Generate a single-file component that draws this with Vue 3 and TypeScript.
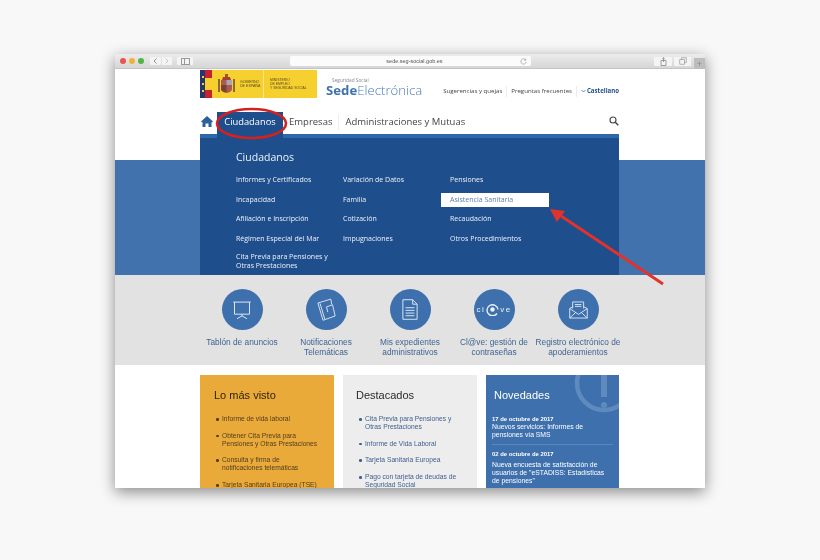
<script setup lang="ts">
const menu: string[][] = [
  ['Informes y Certificados', 'Incapacidad', 'Afiliación e Inscripción', 'Régimen Especial del Mar', 'Cita Previa para Pensiones y Otras Prestaciones'],
  ['Variación de Datos', 'Familia', 'Cotización', 'Impugnaciones'],
  ['Pensiones', 'Asistencia Sanitaria', 'Recaudación', 'Otros Procedimientos'],
]
const masVisto = ['Informe de vida laboral', 'Obtener Cita Previa para Pensiones y Otras Prestaciones', 'Consulta y firma de notificaciones telemáticas', 'Tarjeta Sanitaria Europea (TSE)']
const destacados = ['Cita Previa para Pensiones y Otras Prestaciones', 'Informe de Vida Laboral', 'Tarjeta Sanitaria Europea', 'Pago con tarjeta de deudas de Seguridad Social']
</script>

<template>
  <div class="desk">
    <div class="window">
      <div class="chrome">
        <div class="lights"><i class="r"></i><i class="y"></i><i class="g"></i></div>
        <div class="navbtns">
          <span><svg width="4" height="6" viewBox="0 0 4 6"><path d="M3.500 .5L1 3l2.500 2.500" fill="none" stroke="#777" stroke-width=".8"/></svg></span>
          <span><svg width="4" height="6" viewBox="0 0 4 6"><path d="M.5 .5L3 3 .5 5.500" fill="none" stroke="#bbb" stroke-width=".8"/></svg></span>
        </div>
        <div class="sidebtn"><svg width="9" height="7" viewBox="0 0 9 7"><rect x=".5" y=".5" width="8" height="6" fill="none" stroke="#999"/><path d="M3.500 .5v6" stroke="#999"/></svg></div>
        <div class="url">
          <span class="urltext">sede.seg-social.gob.es</span>
          <svg class="reload" width="7" height="7" viewBox="0 0 8 8"><path d="M6.500 2.200A3 3 0 1 0 7 4.500M6.600 .8v1.800H4.800" fill="none" stroke="#999" stroke-width=".8"/></svg>
        </div>
        <div class="rbtn"><svg width="7" height="9" viewBox="0 0 7 9"><path d="M1 3.500h5v5H1zM3.500 5V.8M2.200 2l1.300-1.200L4.800 2" fill="none" stroke="#888" stroke-width=".8"/></svg></div>
        <div class="rbtn"><svg width="8" height="8" viewBox="0 0 8 8"><path d="M2.500 2.500V.7h4.800v4.800H5.500M.7 2.500h4.800v4.800H.7z" fill="none" stroke="#999" stroke-width=".7"/></svg></div>
        <div class="plus">+</div>
      </div>

      <div class="page">
        <header class="head">
          <div class="flagbox">
            <div class="flagstrip">
              <div class="navy"><i></i><i></i><i></i></div>
              <div class="rojo"><i class="st1"></i><i class="st2"></i><i class="st3"></i></div>
            </div>
            <div class="gob">
              <svg class="crest" width="19" height="22" viewBox="0 0 19 22">
                <rect x="1" y="6" width="2" height="13" fill="#8a6a3a"/><rect x="16" y="6" width="2" height="13" fill="#8a6a3a"/>
                <path d="M6 4h7l1 3H5z" fill="#a6402e"/><path d="M8 1h3v3H8z" fill="#9a5a28"/>
                <path d="M4 7h11v9q0 3-5.500 4Q4 19 4 16z" fill="#a85c50"/><path d="M9.500 7h5.500v5h-5.500z" fill="#a9a4b4"/><path d="M4 12h5.500v7Q4 18.500 4 16z" fill="#7c4030"/>
              </svg>
              <span class="gobtxt">GOBIERNO<br>DE ESPAÑA</span>
            </div>
            <div class="min">MINISTERIO<br>DE EMPLEO<br>Y SEGURIDAD SOCIAL</div>
          </div>
          <div class="sede">
            <div class="seg">Seguridad Social</div>
            <div class="sedename"><b>Sede</b>Electrónica</div>
          </div>
          <div class="links">
            <span>Sugerencias y quejas</span><em></em><span>Preguntas frecuentes</span><em></em>
            <svg width="5" height="4" viewBox="0 0 5 4"><path d="M.5 1l2 2 2-2" fill="none" stroke="#2c5c95" stroke-width=".7"/></svg>
            <strong>Castellano</strong>
          </div>
        </header>

        <nav class="nav">
          <svg class="home" width="12" height="11" viewBox="0 0 12 11"><path d="M6 0L0 5.500l1 1 .5-.4V11h3V7.500h3V11h3V6.100l.5.400 1-1z" fill="#2c6099"/></svg>
          <div class="tab">Ciudadanos</div>
          <div class="item">Empresas</div>
          <div class="item sep">Administraciones y Mutuas</div>
          <svg class="search" width="10" height="10" viewBox="0 0 10 10"><circle cx="4" cy="4" r="3" fill="none" stroke="#444" stroke-width="1.100"/><path d="M6.300 6.300L9.300 9.300" stroke="#444" stroke-width="1.500"/></svg>
        </nav>

        <section class="band">
          <div class="dropdown">
            <h2>Ciudadanos</h2>
            <div class="cols">
              <ul v-for="(col, i) in menu" :key="i" class="col">
                <li v-for="m in col" :key="m" :class="{ active: m === 'Asistencia Sanitaria', long: m.length > 30 }">{{ m }}</li>
              </ul>
            </div>
          </div>
        </section>

        <section class="services">
          <div class="svc">
            <div class="disc"><svg width="20" height="20" viewBox="0 0 24 24" fill="none" stroke="#dce6f2" stroke-width="1.200"><path d="M1.500 2.500h21M3 2.500v14.500h18V2.500M12 17v2M6 22.500l6-3.500 6 3.500"/></svg></div>
            <p>Tablón de anuncios</p>
          </div>
          <div class="svc">
            <div class="disc"><svg width="19" height="23" viewBox="0 0 22 26" fill="none" stroke="#dce6f2" stroke-width="1.100"><path d="M1 5.500L16 1l1 6M1 5.500l6 20 14-5-3-13-7 2.500 1.500 6"/><path d="M3.500 6l5.500 18"/></svg></div>
            <p>Notificaciones<br>Telemáticas</p>
          </div>
          <div class="svc">
            <div class="disc"><svg width="16" height="23" viewBox="0 0 18 24" fill="none" stroke="#dce6f2" stroke-width="1.100"><path d="M1 1h11l5 5v17H1zM12 1v5h5M4 10h10M4 13h10M4 16h10M4 19h10"/></svg></div>
            <p>Mis expedientes<br>administrativos</p>
          </div>
          <div class="svc">
            <div class="disc clave"><span>cl</span><svg width="13" height="13" viewBox="0 0 13 13" fill="none" stroke="#eef3f9"><path d="M11 10.500A5.500 5.500 0 1 1 12 6.500" stroke-width="1.300"/><circle cx="6.500" cy="6.500" r="2.200" fill="#eef3f9" stroke="none"/></svg><span>ve</span></div>
            <p>Cl@ve: gestión de<br>contraseñas</p>
          </div>
          <div class="svc">
            <div class="disc"><svg width="19" height="18" viewBox="0 0 26 24" fill="none" stroke="#dce6f2" stroke-width="1.300"><path d="M5 10V1h15v9M8 4.500h9M8 7h9M1 10l4-2.500M25 10l-5-2.500M1 10v13h24V10L13 18zM1 23l8.500-8M25 23l-8.500-8"/></svg></div>
            <p>Registro electrónico de<br>apoderamientos</p>
          </div>
        </section>

        <section class="cards">
          <article class="card orange">
            <h3>Lo más visto</h3>
            <ul><li v-for="t in masVisto" :key="t">{{ t }}</li></ul>
          </article>
          <article class="card grey">
            <h3>Destacados</h3>
            <ul><li v-for="t in destacados" :key="t">{{ t }}</li></ul>
          </article>
          <article class="card blue">
            <svg class="bang" width="133" height="60" viewBox="0 0 133 60" fill="none"><circle cx="118" cy="8" r="27" stroke="#5f8abd" stroke-width="4.500"/><path d="M118 0v22" stroke="#5f8abd" stroke-width="6"/><circle cx="118" cy="30" r="3" fill="#5f8abd"/></svg>
            <h3>Novedades</h3>
            <div class="news">
              <b>17 de octubre de 2017</b>
              <p>Nuevos servicios: Informes de pensiones vía SMS</p>
            </div>
            <div class="news second">
              <b>02 de octubre de 2017</b>
              <p>Nueva encuesta de satisfacción de usuarios de "eSTADISS: Estadísticas de pensiones"</p>
            </div>
          </article>
        </section>

        <svg class="marks" width="590" height="419" viewBox="0 0 590 419" fill="none">
          <ellipse cx="136.500" cy="54.500" rx="34.500" ry="14.500" stroke="#d3211f" stroke-width="2.500"/>
          <path d="M548 215L446 147" stroke="#e1322b" stroke-width="3"/>
          <path d="M435 140l15 2-8 11z" fill="#e1322b"/>
        </svg>
      </div>
    </div>
  </div>
</template>

<style>
html, body { margin: 0; background: #f8f8f8; }
</style>

<style scoped>
.desk { width: 820px; height: 560px; box-sizing: border-box; padding: 54px 115px 72px; background: #f8f8f8; overflow: hidden; }
.window { width: 590px; height: 434px; box-shadow: 0 4px 14px rgba(0,0,0,.45); overflow: hidden; background: #fff; filter: blur(.5px); }
.chrome { height: 15px; background: linear-gradient(#ececec, #d6d6d6); display: flex; align-items: center; padding-left: 5px; box-sizing: border-box; border-bottom: 1px solid #c4c4c4; position: relative; }
.lights { display: flex; gap: 3px; }
.lights i { width: 6px; height: 6px; border-radius: 50%; display: block; }
.r { background: #e8544e; } .y { background: #eeb43a; } .g { background: #4fb648; }
.navbtns { display: flex; margin-left: 6px; gap: 1px; }
.navbtns span { width: 10.500px; height: 8px; background: #f4f4f4; display: flex; align-items: center; justify-content: center; border-radius: 1px; }
.sidebtn { width: 16px; height: 8px; background: #f4f4f4; margin-left: 5px; display: flex; align-items: center; justify-content: center; border-radius: 1px; }
.url { width: 241px; height: 10px; margin-left: 97px; background: #fbfbfb; border-radius: 2px; position: relative; display: flex; align-items: center; justify-content: center; }
.urltext { font: 5.500px/9px "Liberation Sans", sans-serif; color: #555; margin-left: 8px; }
.reload { position: absolute; right: 4px; top: 1.500px; }
.rbtn { width: 18px; height: 9px; background: #f4f4f4; margin-left: 123px; display: flex; align-items: center; justify-content: center; border-radius: 1px; flex: none; }
.rbtn + .rbtn { margin-left: 2px; width: 17px; }
.plus { position: absolute; right: 0; top: 4px; width: 11px; height: 11px; background: #bdbdbd; color: #8a8a8a; font: 9px/12px "Liberation Sans", sans-serif; text-align: center; }
.page { position: relative; height: 419px; overflow: hidden; background: #fff; font-family: "Open Sans", sans-serif; }

.head { height: 31px; margin-left: 85px; width: 419px; display: flex; align-items: flex-start; }
.flagbox { width: 117px; height: 28px; margin-top: 1px; display: flex; align-items: stretch; background: #f6d02e; flex: none; }
.flagstrip { width: 12px; display: flex; flex: none; }
.navy { width: 5px; background: #24356f; display: flex; flex-direction: column; align-items: center; justify-content: space-around; padding: 4px 0; box-sizing: border-box; }
.navy i { width: 2px; height: 2px; background: #f6d02e; display: block; }
.rojo { width: 7px; display: flex; flex-direction: column; }
.st1 { height: 8px; background: #c8202c; } .st2 { height: 12px; background: #f6d02e; } .st3 { flex: 1; background: #c8202c; }
.gob { width: 52px; display: flex; align-items: center; gap: 4px; padding-left: 5px; box-sizing: border-box; border-right: 1px solid #fbe58a; flex: none; }
.crest { flex: none; }
.gobtxt, .min { font: 3.600px/4.200px "Liberation Sans", sans-serif; color: #5a4a20; white-space: nowrap; }
.min { font-size: 3.400px; margin-left: 6px; align-self: center; }
.sede { margin-left: 9px; }
.seg { font: 4.800px/6px "Open Sans", sans-serif; color: #888; margin: 8px 0 0 6px; white-space: nowrap; }
.sedename { font: 300 13.200px/13px "Open Sans", sans-serif; color: #4a7cb4; white-space: nowrap; margin-top: .5px; }
.sedename b { font-weight: 700; color: #3f72ad; }
.links { display: flex; align-items: center; margin-left: auto; height: 14px; margin-top: 15px; font: 6.100px/14px "Open Sans", sans-serif; color: #444; gap: 4px; white-space: nowrap; }
.links em { width: 1px; height: 11px; background: #ececec; }
.links strong { color: #1f4e8a; font-weight: 700; margin-left: -3px; }

.nav { height: 35px; margin-left: 85px; width: 419px; display: flex; align-items: flex-start; position: relative; z-index: 1; }
.home { margin: 16px 0 0 1px; flex: none; }
.tab { width: 66px; height: 26px; margin: 12px 0 0 4px; padding-top: 2px; box-sizing: border-box; background: #1f4e8c; color: #fff; font-size: 9.300px; line-height: 16px; text-align: center; white-space: nowrap; }
.item { font-size: 9.500px; line-height: 16px; margin-top: 14px; color: #444; padding-left: 6px; white-space: nowrap; }
.item.sep { margin-left: 6px; padding-left: 6px; border-left: 1px solid #eee; }
.search { position: absolute; right: 0; top: 16px; }

.band { height: 115px; margin-top: 25px; background: #4272ae; position: relative; }
.dropdown { position: absolute; left: 85px; top: -26px; width: 419px; height: 141px; box-sizing: border-box; background: #1f4e8c; border-top: 4px solid #2d69a8; padding: 11px 0 0 36px; color: #eef2f8; overflow: hidden; }
.dropdown h2 { margin: 0; font-size: 10.500px; font-weight: 400; line-height: 16px; }
.cols { display: flex; margin-top: 10px; }
.col { list-style: none; margin: 0; padding: 0; width: 107px; }
.col li { font-size: 7px; line-height: 10px; min-height: 10px; margin-bottom: 9.600px; width: 95px; }
.col li.long { line-height: 8.500px; margin-top: 1px; }
.col li.active { background: #fff; color: #5d7fab; width: 108px; margin-left: -9px; padding: 2px 0 2px 9px; box-sizing: border-box; height: 14px; margin-top: -2px; margin-bottom: 7.600px; }

.services { height: 90px; background: #e2e2e2; display: flex; padding-left: 85px; }
.svc { width: 84px; flex: none; display: flex; flex-direction: column; align-items: center; padding-top: 14px; box-sizing: border-box; }
.disc { width: 41px; height: 41px; border-radius: 50%; background: #3e70ad; display: flex; align-items: center; justify-content: center; flex: none; }
.svc p { margin: 7px 0 0; font: 8.300px/10px "Liberation Sans", sans-serif; color: #3f6590; text-align: center; white-space: nowrap; }
.clave { gap: 1px; color: #eef3f9; font: 8px/10px "Liberation Sans", sans-serif; letter-spacing: 1.500px; }

.cards { display: flex; gap: 9px; margin: 10px 0 0 85px; width: 419px; height: 200px; }
.card { width: 134px; height: 200px; box-sizing: border-box; padding: 13px 13px 0 14px; position: relative; overflow: hidden; font-family: "Liberation Sans", sans-serif; flex: none; }
.card h3 { margin: 0; font-size: 11px; font-weight: 400; line-height: 14px; }
.card ul { margin: 13px 0 0; padding: 0 0 0 8px; list-style: none; }
.card li { font-size: 6.700px; line-height: 8px; margin-bottom: 8.700px; position: relative; }
.card li::before { content: ""; position: absolute; left: -6px; top: 3px; width: 2.500px; height: 2.500px; background: currentColor; border-radius: 50%; }
.orange { background: #eaaa3a; color: #4f3d20; }
.orange h3 { color: #2c2412; }
.grey { background: #ededed; color: #3f5f8f; padding-left: 13px; }
.grey ul { padding-left: 9px; }
.grey h3 { color: #2a2a2a; }
.blue { background: #3e70ad; color: #fff; padding: 13px 6px 0; width: 133px; }
.blue h3 { position: relative; margin-left: 2px; }
.bang { position: absolute; left: 0; top: 0; }
.news { margin-top: 13px; position: relative; }
.news b { display: block; font-size: 5.900px; line-height: 8px; }
.news p { margin: 0; font-size: 6.800px; line-height: 8px; }
.news.second { margin-top: 5px; padding-top: 5px; border-top: 1px solid #5a86bb; }
.news.second p { margin-top: 3px; }
.marks { position: absolute; left: 0; top: 0; pointer-events: none; z-index: 2; }
</style>
